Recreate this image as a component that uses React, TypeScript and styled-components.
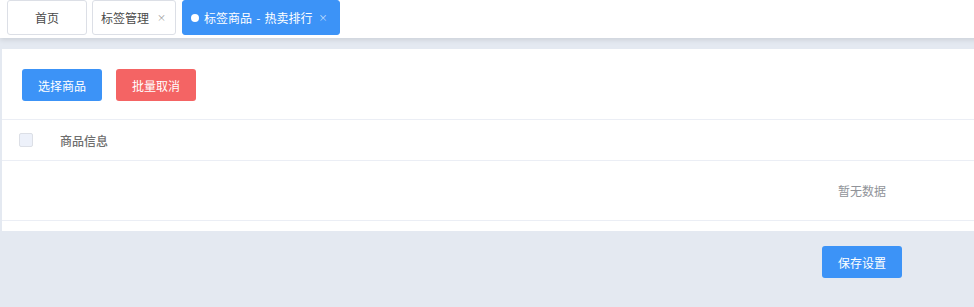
import React from "react";
import styled, { createGlobalStyle } from "styled-components";

const Global = createGlobalStyle`
  html, body { margin: 0; padding: 0; overflow: hidden; background: #e4e9f1; }
  body { font-family: "Noto Sans CJK SC", "Noto Sans", sans-serif; }
  * { box-sizing: border-box; }
`;

const Page = styled.div`
  width: 1724px;
  min-height: 307px;
  background: #e4e9f1;
`;

const TabBar = styled.div`
  position: relative;
  z-index: 1;
  height: 38px;
  background: #fff;
  display: flex;
  align-items: flex-start;
  gap: 5px;
  padding-left: 7px;
  box-shadow: 0 2px 5px rgba(0, 0, 0, 0.1);
`;

const Tab = styled.div<{ $active?: boolean; $w: number }>`
  width: ${(p) => p.$w}px;
  height: 35px;
  margin-left: ${(p) => (p.$active ? 1 : 0)}px;
  border: 1px solid ${(p) => (p.$active ? "#3c93f7" : "#dcdfe6")};
  background: ${(p) => (p.$active ? "#3c93f7" : "#fff")};
  color: ${(p) => (p.$active ? "#fff" : "#4a4a4a")};
  border-radius: 3px;
  font-size: 12px;
  display: flex;
  align-items: center;
  padding-left: 8px;
  white-space: nowrap;
  word-spacing: ${(p) => (p.$active ? 1.5 : 0)}px;
`;

const CenterTab = styled(Tab)`
  justify-content: center;
  padding-left: 0;
`;

const Dot = styled.span`
  width: 8px;
  height: 8px;
  border-radius: 50%;
  background: #fff;
  margin-right: 5px;
`;

const Close = styled.span<{ $active?: boolean }>`
  font-size: 9px;
  margin-left: ${(p) => (p.$active ? 6 : 8)}px;
  color: ${(p) => (p.$active ? "rgba(255,255,255,0.75)" : "#999")};
`;

const Body = styled.div`
  padding: 11px 2px 0 2px;
`;

const Card = styled.div`
  background: #fff;
  padding-top: 20px;
  padding-bottom: 10px;
`;

const Toolbar = styled.div`
  display: flex;
  gap: 14px;
  padding-left: 20px;
  margin-bottom: 18px;
`;

const Button = styled.button<{ $color: string }>`
  width: 80px;
  height: 32px;
  border: none;
  border-radius: 3px;
  background: ${(p) => p.$color};
  color: #fff;
  font-family: inherit;
  font-size: 12px;
  padding: 0;
  cursor: pointer;
`;

const HeaderRow = styled.div`
  height: 42px;
  border-top: 1px solid #ebeef5;
  border-bottom: 1px solid #ebeef5;
  display: flex;
  align-items: center;
`;

const CheckCell = styled.div`
  width: 58px;
  padding-left: 17px;
  display: flex;
  align-items: center;
`;

const Checkbox = styled.span`
  width: 14px;
  height: 14px;
  border: 1px solid #dcdfe6;
  border-radius: 2px;
  background: #edf1fa;
`;

const HeadText = styled.div`
  font-size: 12px;
  font-weight: 500;
  color: #6e6e6e;
`;

const EmptyRow = styled.div`
  height: 60px;
  border-bottom: 1px solid #ebeef5;
  display: flex;
  align-items: center;
  justify-content: center;
  font-size: 12px;
  color: #909399;
`;

const Footer = styled.div`
  display: flex;
  justify-content: center;
  padding-top: 15px;
`;

export default function App() {
  return (
    <Page>
      <Global />
      <TabBar>
        <CenterTab $w={80}>首页</CenterTab>
        <Tab $w={84}>
          标签管理<Close>×</Close>
        </Tab>
        <Tab $w={158} $active>
          <Dot />
          标签商品 - 热卖排行<Close $active>×</Close>
        </Tab>
      </TabBar>
      <Body>
        <Card>
          <Toolbar>
            <Button $color="#3c93f7">选择商品</Button>
            <Button $color="#f46464">批量取消</Button>
          </Toolbar>
          <HeaderRow>
            <CheckCell>
              <Checkbox />
            </CheckCell>
            <HeadText>商品信息</HeadText>
          </HeaderRow>
          <EmptyRow>暂无数据</EmptyRow>
        </Card>
      </Body>
      <Footer>
        <Button $color="#3c93f7">保存设置</Button>
      </Footer>
    </Page>
  );
}
